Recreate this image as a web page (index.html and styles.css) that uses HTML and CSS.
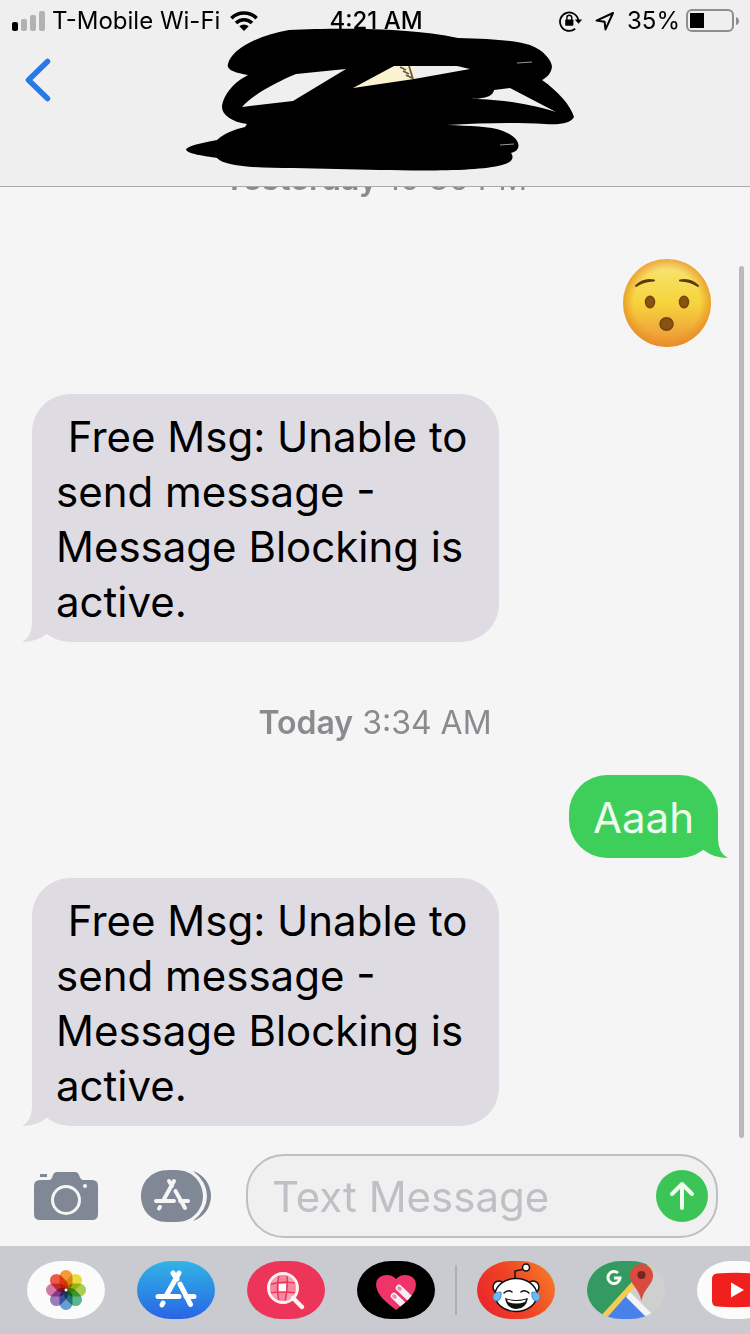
FILE: index.html
```html
<!DOCTYPE html>
<html lang="en">
<head>
<meta charset="utf-8">
<meta name="viewport" content="width=device-width, initial-scale=1">
<title>Messages</title>
<link rel="stylesheet" href="styles.css">
</head>
<body>
<div class="screen">
  <header class="header">
    <div class="status">
      <div class="status-left">
        <svg class="signal" viewBox="0 0 34 20" aria-hidden="true">
          <rect x="0" y="11" width="6" height="9" rx="2" fill="#000"/>
          <rect x="9" y="8" width="6" height="12" rx="2" fill="#b2b2b2"/>
          <rect x="18" y="4" width="6" height="16" rx="2" fill="#b2b2b2"/>
          <rect x="27" y="0" width="6" height="20" rx="2" fill="#b2b2b2"/>
        </svg>
        <span class="carrier">T-Mobile Wi-Fi</span>
        <svg class="wifi" viewBox="0 0 28 20" aria-hidden="true">
          <g fill="none" stroke="#000" stroke-width="3.6">
            <path d="M1.4 7.2a18 18 0 0 1 25.2 0"/>
            <path d="M6 12a11.4 11.4 0 0 1 16 0"/>
          </g>
          <path d="M9.3 15.3a6.8 6.8 0 0 1 9.4 0L14 20z"/>
        </svg>
      </div>
      <span class="time">4:21 AM</span>
      <div class="status-right">
        <svg class="lock" viewBox="0 0 24 22" aria-hidden="true">
          <path d="M16.2 18.7A9.2 9.2 0 1 1 19.4 11" fill="none" stroke="#000" stroke-width="1.8"/>
          <path d="M15.8 9.6h7.4l-3.7 4.2z"/>
          <rect x="6.2" y="9.4" width="8.2" height="6.4" rx="0.8"/>
          <path d="M7.9 10V7.6a2.4 2.4 0 0 1 4.8 0V10" fill="none" stroke="#000" stroke-width="1.4"/>
        </svg>
        <svg class="location" viewBox="0 0 20 20" aria-hidden="true">
          <path d="M18 2L1.500 9.600l8.100 1.200.9 7.600z" fill="none" stroke="#000" stroke-width="2" stroke-linejoin="round"/>
        </svg>
        <span class="percent">35%</span>
        <svg class="battery" viewBox="0 0 54 24" aria-hidden="true">
          <rect x="1" y="1" width="46" height="21" rx="5" fill="none" stroke="#8e8e8e" stroke-width="2"/>
          <rect x="4" y="4" width="14" height="15"/>
          <path d="M50 8q3 1 3 4t-3 4z" fill="#8e8e8e"/>
        </svg>
      </div>
    </div>
    <button class="back" type="button" aria-label="Back">
      <svg viewBox="0 0 26 44" aria-hidden="true"><path d="M22.500 3.500L3.500 22L22.500 40.500" fill="none" stroke="#2777e6" stroke-width="5.500" stroke-linecap="round" stroke-linejoin="round"/></svg>
    </button>
    <svg class="scribble" viewBox="0 0 400 187" aria-hidden="true">
      <path fill="#fbf3cf" d="M170 90L215 65H232L236 80z"/>
      <path d="M220 67l6 3M223 71l6 3M226 75l6 3M229 66l4 13" stroke="#6b5846" stroke-width="1.800"/>
      <path fill-rule="evenodd" d="M48 64C51 50 75 36 109 30C155 28 228 27 278 38C310 39 334 40 350 45C364 50 372 61 372 67C371 74 366 78 362 80C378 91 391 106 394 117C391 123 381 125 365 124C335 122 300 123 267 125C290 126 310 126 323 131C336 136 340 143 338 148C337 151 334 152 331 153C335 158 331 163 322 165C300 171 250 171 200 170L113 168C80 168 45 167 37 158C25 156 6 154 6 149C12 144 28 142 37 140C43 134 55 129 65 127L67 124C52 122 42 115 42 107C43 95 54 82 68 75C55 73 46 70 48 64zM62 107L113 101L166 69L116 74C99 81 73 94 62 107zM173 88L234 79L290 69L277 66L214 66zM288 99C310 99 340 101 376 112L330 88L314 90C313 96 306 99 288 99z"/>
      <path d="M337 63l15-1M320 145l14-1" stroke="#999" stroke-width="1"/>
    </svg>
  </header>

  <main class="thread">
    <p class="stamp"><b>Yesterday</b> 10:36 PM</p>
    <svg class="emoji" viewBox="0 0 88 88" role="img" aria-label="Hushed face">
      <defs>
        <linearGradient id="face" x1="0" y1="0" x2="0" y2="1">
          <stop offset="0" stop-color="#fbe88a"/><stop offset=".2" stop-color="#f7df5f"/>
          <stop offset=".5" stop-color="#f6d43c"/><stop offset=".85" stop-color="#f0a53a"/><stop offset="1" stop-color="#eb9535"/>
        </linearGradient>
        <radialGradient id="rim">
          <stop offset=".75" stop-color="#e98a1c" stop-opacity="0"/><stop offset="1" stop-color="#e58a22" stop-opacity=".7"/>
        </radialGradient>
      </defs>
      <circle cx="44" cy="44" r="44" fill="url(#face)"/>
      <circle cx="44" cy="44" r="44" fill="url(#rim)"/>
      <path d="M13 27Q21 19 31 21.500Q20 22 13 27zM75 27Q67 19 57 21.500Q68 22 75 27z" fill="#5d3909" stroke="#5d3909" stroke-width="2" stroke-linejoin="round"/>
      <g fill="#8a5210" stroke="#75430c" stroke-width="1.500">
        <ellipse cx="27" cy="43" rx="4.500" ry="5.800"/><ellipse cx="61" cy="43" rx="4.500" ry="5.800"/>
        <ellipse cx="43.500" cy="65" rx="6.500" ry="6.200"/>
      </g>
    </svg>
    <div class="bubble received">
      <p class="text">&nbsp;Free Msg: Unable to send message - Message Blocking is active.</p>
      <svg class="tail" viewBox="0 0 32 40" aria-hidden="true"><path d="M10 0V20Q10 35 0 40Q14 40 23 33L32 26V0z"/></svg>
    </div>
    <p class="stamp"><b>Today</b> 3:34 AM</p>
    <div class="bubble sent">
      <p class="text">Aaah</p>
      <svg class="tail" viewBox="0 0 32 40" aria-hidden="true"><path d="M10 0V20Q10 35 0 40Q14 40 23 33L32 26V0z"/></svg>
    </div>
    <div class="bubble received">
      <p class="text">&nbsp;Free Msg: Unable to send message - Message Blocking is active.</p>
      <svg class="tail" viewBox="0 0 32 40" aria-hidden="true"><path d="M10 0V20Q10 35 0 40Q14 40 23 33L32 26V0z"/></svg>
    </div>
    <div class="scrollbar"></div>
  </main>

  <form class="composer">
    <button class="tool camera" type="button" aria-label="Camera">
      <svg viewBox="0 0 64 50" aria-hidden="true">
        <path fill="#808895" d="M6 3h7v3H6zM6 9h9c2 0 3-2 4-5q1-3 4-3h18q3 0 4 3c1 3 2 5 5 5h8q6 0 6 6v28q0 6-6 6H6q-6 0-6-6V15q0-6 6-6z"/>
        <circle cx="32" cy="29" r="13.500" fill="none" stroke="#f5f5f5" stroke-width="3"/>
        <circle cx="51" cy="15" r="2" fill="#f5f5f5"/>
      </svg>
    </button>
    <button class="tool apps" type="button" aria-label="Apps">
      <svg viewBox="0 0 72 52" aria-hidden="true">
        <path fill="#808895" d="M28 0h7c18 0 27 14 27 26S53 52 35 52H26C9 52 0 39 0 26S9 0 28 0zM52 1c12 4 18 15 18 25s-6 21-18 25q14-11 14-25T52 1z"/>
        <g stroke="#f5f5f5" stroke-width="4" stroke-linecap="round" fill="none"><path d="M33 11L22 31M28 11l3 5M34.500 21L44 38M15 31h18M39 31h8M19 37l-1 1.500"/></g>
      </svg>
    </button>
    <div class="field">
      <input class="input" type="text" placeholder="Text Message" aria-label="Text Message">
      <button class="send" type="submit" aria-label="Send">
        <svg viewBox="0 0 52 52" aria-hidden="true"><path d="M26 38V14M16 24L26 14L36 24" fill="none" stroke="#f0fbf0" stroke-width="4" stroke-linecap="round" stroke-linejoin="round"/></svg>
      </button>
    </div>
  </form>

  <nav class="dock" aria-label="Message apps">
    <div class="dock-group">
      <button class="app photos" type="button" aria-label="Photos">
        <svg viewBox="0 0 78 58" aria-hidden="true">
          <defs><rect id="petal" x="32.500" y="9" width="13" height="20" rx="6.500"/></defs>
          <g class="petals">
            <use href="#petal" fill="#f29b38"/>
            <use href="#petal" fill="#e9dc3c" transform="rotate(45 39 29)"/>
            <use href="#petal" fill="#a8ce4c" transform="rotate(90 39 29)"/>
            <use href="#petal" fill="#58b88c" transform="rotate(135 39 29)"/>
            <use href="#petal" fill="#659fd6" transform="rotate(180 39 29)"/>
            <use href="#petal" fill="#9c7cbd" transform="rotate(225 39 29)"/>
            <use href="#petal" fill="#d577ab" transform="rotate(270 39 29)"/>
            <use href="#petal" fill="#ec5a4c" transform="rotate(315 39 29)"/>
          </g>
          <circle cx="39" cy="29" r="1.500" fill="#fff"/>
        </svg>
      </button>
      <button class="app store" type="button" aria-label="App Store">
        <svg viewBox="0 0 78 58" aria-hidden="true"><g stroke="#fff" stroke-width="5" stroke-linecap="round" fill="none"><path d="M42 12L29 35M36 12l4 6M43 23L53.500 43.500M21 35.500h21M49 35.500h8M26 42l-1 2"/></g></svg>
      </button>
      <button class="app images" type="button" aria-label="Image search">
        <svg viewBox="0 0 78 58" aria-hidden="true">
          <circle cx="36" cy="27" r="13" fill="#f8a0b2"/>
          <path fill="#fff" d="M32 23h7v8h-7z"/>
          <path fill="#ee4d6b" d="M32 14h7v8h-7zM32 32h7v7h-7zM24 23h7v8h-7zM40 23h8v8h-8z" opacity=".3"/>
          <path d="M32 13Q29 27 32 41M40 13Q41 27 38 41M23 23Q36 20 49 22M23 32Q36 30 49 32" fill="none" stroke="#ec3558" stroke-width="1.500"/>
          <circle cx="36" cy="27" r="14.500" fill="none" stroke="#fff0f2" stroke-width="3"/>
          <path d="M46 37l9 9" stroke="#fff0f2" stroke-width="4.500" stroke-linecap="round"/>
        </svg>
      </button>
      <button class="app touch" type="button" aria-label="Digital Touch">
        <svg viewBox="0 0 78 58" aria-hidden="true">
          <defs><clipPath id="heart"><path d="M39 18C34 12 24 13 20 19C17 27 21 36 39 49C57 36 61 27 58 19C54 13 44 12 39 18z"/></clipPath></defs>
          <g clip-path="url(#heart)"><path fill="#ee3468" d="M15 10h50v42H15z"/>
          <path d="M42 27l22 21M37 35l20 19" stroke="#f7f0f4" stroke-width="6.500" stroke-linecap="round"/>
          <path d="M42 27l1 1M37 35l1 1" stroke="#e68bb0" stroke-width="3.500" stroke-linecap="round"/></g>
        </svg>
      </button>
    </div>
    <span class="divider"></span>
    <div class="dock-group">
      <button class="app reddit" type="button" aria-label="Reddit">
        <svg viewBox="0 0 78 58" aria-hidden="true">
          <g fill="#fff" stroke="#111" stroke-width="1.500">
            <path d="M38 18l0-8 9-2" fill="none"/><circle cx="49" cy="6.500" r="3.500"/>
            <circle cx="22" cy="26" r="6"/><circle cx="56" cy="26" r="6"/>
            <ellipse cx="39" cy="34" rx="21" ry="16.500"/>
            <path d="M27 32q4-4 8-1M44 31q4-3 8 1" fill="none" stroke-linecap="round"/>
          </g>
          <path d="M28 37q11 4 23 0-2 11-11.500 11T28 37z" fill="#111"/><path d="M30 38.500q9 3 19 0l-1 2.500q-9 3-17 0z" fill="#fff"/>
          <path d="M24 31q-8 0-8 5 0 4 4 4 5-1 4-9zM55 31q8 0 8 5 0 4-4 4-5-1-4-9z" fill="#70b9ed" stroke="#3d8ed3" stroke-width="1"/>
        </svg>
      </button>
      <button class="app maps" type="button" aria-label="Google Maps">
        <svg viewBox="0 0 78 58" aria-hidden="true">
          <path fill="#cfcfcf" d="M0 0h78v58H0z"/>
          <path fill="#339a61" d="M0 0h64L12 58H0z"/>
          <path fill="#f5cb54" d="M64 0h7L20 58H11z"/>
          <path fill="#cfcfcf" d="M71 0L41 33.500L60 58H78V0z"/>
          <path fill="#4781e9" d="M40 34L64 60H17z"/>
          <path fill="#f4f4f4" d="M43 31L70 58h-9L39 36z"/>
          <path d="M31 12a6 6 0 1 0 2 5h-6" fill="none" stroke="#f4faf5" stroke-width="3"/>
          <path fill="#d84c3f" d="M54.500 3C48 3 43 8 43 14.500C43 24 52 27 54.500 40C57 27 66 24 66 14.500C66 8 61 3 54.500 3z"/>
          <circle cx="54.500" cy="14" r="4" fill="#77251f"/>
        </svg>
      </button>
      <button class="app youtube" type="button" aria-label="YouTube">
        <svg viewBox="0 0 78 58" aria-hidden="true"><path fill="#f0201c" d="M20 12.500Q39 11 58 12.500Q63 13 63 18V40Q63 45 58 45.500Q39 47 20 45.500Q15 45 15 40V18Q15 13 20 12.500z"/><path fill="#fff" d="M34 21.500v15L47 29z"/></svg>
      </button>
    </div>
  </nav>
</div>
</body>
</html>
```
FILE: styles.css
```css
* { box-sizing: border-box; }
body { margin: 0; font-family: Inter, "Liberation Sans", sans-serif; color: #000; background: #f5f5f5; }
p { margin: 0; }
svg { display: block; }
button { border: 0; padding: 0; background: none; cursor: pointer; }

.screen { display: flex; flex-direction: column; height: 100vh; overflow: hidden; }

.header { position: relative; flex: none; height: 187px; background: #efefef; border-bottom: 1px solid #ababab; }
.status { display: grid; grid-template-columns: 1fr auto 1fr; align-items: center; height: 40px; padding: 1px 10px 0 12px; font-size: 24px; line-height: 38px; }
.status-left, .status-right { display: flex; align-items: center; gap: 6px; }
.status-right { justify-content: flex-end; }
.signal { width: 34px; height: 20px; }
.wifi { width: 28px; height: 20px; margin-left: 4px; }
.time { font-weight: 500; }
.lock { width: 24px; height: 22px; }
.location { width: 20px; height: 20px; margin: 0 6px; }
.battery { width: 54px; height: 24px; }
.back { display: block; margin: 18px 0 0 25px; }
.back svg { width: 26px; height: 44px; }
.scribble { position: absolute; top: 0; left: calc(50% - 195px); width: 400px; height: 187px; }

.thread { position: relative; flex: 1; min-height: 0; overflow: hidden; display: flex; flex-direction: column; justify-content: flex-end; align-items: flex-start; padding: 0 32px 20px; }
.stamp { flex: none; align-self: center; margin: 61px 0 32px; font-size: 32px; line-height: 40px; color: #8a8a8f; }
.stamp b { font-weight: 600; }
.emoji { flex: none; align-self: flex-end; width: 88px; height: 88px; margin: 28px 7px 47px; }
.bubble { position: relative; flex: none; padding: 15px 24px 13px; border-radius: 38px; font-size: 42px; line-height: 55px; }
.received { max-width: 467px; background: #dedbe2; fill: #dedbe2; }
.sent { align-self: flex-end; margin-bottom: 20px; background: #3ecf5a; fill: #3ecf5a; color: #f0fbf0; }
.tail { position: absolute; bottom: 0; left: -10px; width: 32px; height: 40px; }
.sent .tail { left: auto; right: -10px; transform: scaleX(-1); }
.scrollbar { position: absolute; top: 79px; right: 6px; bottom: 8px; width: 5px; border-radius: 3px; background: #b9b9b9; }

.composer { flex: none; display: flex; align-items: center; margin: 0; padding: 8px 32px 8px 34px; }
.tool { flex: none; }
.camera svg { width: 64px; height: 50px; }
.apps { margin: 0 33px 0 43px; }
.apps svg { width: 72px; height: 52px; }
.field { flex: 1; min-width: 0; display: flex; align-items: center; height: 84px; padding: 0 8px 0 24px; border: 2px solid #bebec3; border-radius: 38px; background: #f0f0f1; }
.input { flex: 1; min-width: 0; border: 0; outline: 0; padding: 0; background: none; font: inherit; font-size: 42px; line-height: 55px; }
.input::placeholder { color: #bfbfc5; opacity: 1; }
.send { flex: none; width: 52px; height: 52px; border-radius: 50%; background: #3cc557; }

.dock { flex: none; display: flex; align-items: center; height: 88px; padding-left: 27px; overflow: hidden; background: #c9cbd0; }
.dock-group { flex: none; display: flex; gap: 32px; }
.divider { flex: none; width: 2px; height: 50px; margin: 0 20px; background: #acaeb3; }
.app { flex: none; width: 78px; height: 58px; border-radius: 34px / 29px; overflow: hidden; }
.app svg { width: 78px; height: 58px; }
.photos, .youtube { background: #fbfbfb; }
.petals { isolation: isolate; }
.petals use { mix-blend-mode: multiply; }
.store { background: linear-gradient(#32b4e6, #2865e4); }
.images { background: #ec3558; }
.touch { background: #000; }
.reddit { background: linear-gradient(60deg, #e8202e, #f04324 50%, #f6822a); }
```
